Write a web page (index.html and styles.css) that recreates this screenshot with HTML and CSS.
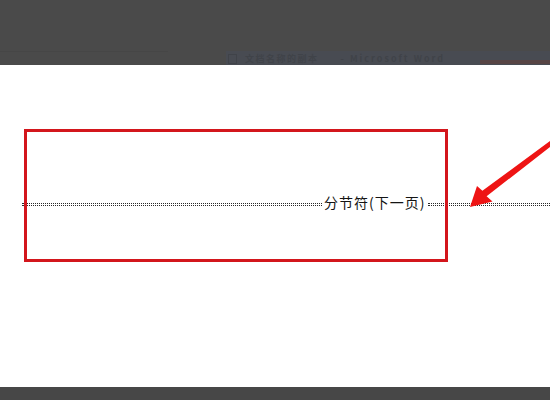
FILE: index.html
```html
<!DOCTYPE html>
<html lang="zh">
<head>
<meta charset="utf-8">
<title>分节符(下一页)</title>
<link rel="stylesheet" href="styles.css">
</head>
<body>
<div class="page">
  <header class="top">
    <div class="strip">
      <div class="strip-left"><div class="faint-line"></div></div>
      <div class="titlebar">
        <span class="doc-icon"></span>
        <span class="title-text">文档名称的副本</span>
        <span class="title-app">- Microsoft Word</span>
        <span class="close-btn"></span>
      </div>
    </div>
  </header>
  <main class="doc">
    <div class="break-row">
      <div class="dots dots-left"></div>
      <span class="break-label">分节符(下一页)</span>
      <div class="dots dots-right"></div>
    </div>
    <div class="highlight-box"></div>
    <svg class="arrow" width="550" height="322" viewBox="0 0 550 322">
      <polygon points="470,142 477,121 482.4,125.7 550,76 550,82 486.6,131.3 492.5,136.5" fill="#ee1414"/>
    </svg>
  </main>
  <footer class="bottom"></footer>
</div>
</body>
</html>
```
FILE: styles.css
```css
html, body {
  margin: 0;
  padding: 0;
  background: #ffffff;
}
.page {
  width: 550px;
  height: 400px;
  display: flex;
  flex-direction: column;
  overflow: hidden;
}
.top {
  height: 65px;
  background: #4a4a4a;
  display: flex;
  flex-direction: column;
  justify-content: flex-end;
}
.strip {
  height: 14px;
  display: flex;
}
.strip-left {
  width: 226px;
}
.faint-line {
  width: 168px;
  height: 1px;
  background: #464646;
}
.titlebar {
  flex: 1;
  background: #484b52;
  display: flex;
  align-items: flex-start;
  padding: 3px 0 0 2px;
  overflow: hidden;
  font-family: "Noto Sans CJK SC", "DejaVu Sans", sans-serif;
  font-weight: bold;
  font-size: 9px;
  line-height: 10px;
  color: #404349;
  gap: 8px;
}
.doc-icon {
  width: 7px;
  height: 8px;
  border: 1px solid #404349;
  flex: none;
}
.title-text {
  letter-spacing: 1.5px;
}
.title-app {
  margin-left: 14px;
  letter-spacing: 2px;
}
.close-btn {
  margin-left: auto;
  width: 70px;
  height: 4px;
  margin-top: 6px;
  background: #574444;
}
.doc {
  position: relative;
  flex: 1;
  background: #ffffff;
}
.break-row {
  margin-top: 129px;
  padding-left: 22px;
  height: 16px;
  display: flex;
  align-items: center;
}
.dots {
  height: 1px;
  border-top: 1px dotted #2a2a2a;
  border-bottom: 1px dotted #2a2a2a;
  margin-top: 4px;
}
.dots-left {
  width: 300px;
}
.dots-right {
  flex: 1;
}
.break-label {
  font-family: "Noto Sans CJK SC", sans-serif;
  font-size: 14px;
  line-height: 16px;
  letter-spacing: 1px;
  color: #141414;
  padding: 0 3px 0 2px;
  white-space: nowrap;
}
.highlight-box {
  position: absolute;
  left: 24px;
  top: 64px;
  width: 418px;
  height: 127px;
  border: 3px solid #d3161c;
}
.arrow {
  position: absolute;
  left: 0;
  top: 0;
}
.bottom {
  height: 13px;
  background: #474747;
}
```
